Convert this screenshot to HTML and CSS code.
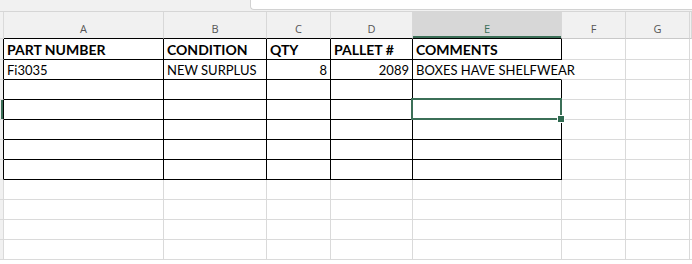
FILE: index.html
```html
<!DOCTYPE html>
<html lang="en">
<head>
    <meta charset="UTF-8">
    <meta name="viewport" content="width=device-width, initial-scale=1.0">
    <title>Pallet Sheet</title>
    <link rel="stylesheet" href="styles.css">
</head>
<body>

    <div class="topbar">
        <div class="formula-box"></div>
    </div>

    <div class="sheet">
        <div class="row colheads">
            <div class="rh"></div>
            <div class="ch top">A</div>
            <div class="ch top">B</div>
            <div class="ch top">C</div>
            <div class="ch top">D</div>
            <div class="ch top active">E</div>
            <div class="ch">F</div>
            <div class="ch">G</div>
            <div class="ch"></div>
        </div>

        <div class="row first">
            <div class="rh edge"></div>
            <div class="c b head">PART NUMBER</div>
            <div class="c b head">CONDITION</div>
            <div class="c b head">QTY</div>
            <div class="c b head">PALLET #</div>
            <div class="c b head">COMMENTS</div>
            <div class="c"></div>
            <div class="c"></div>
            <div class="c"></div>
        </div>

        <div class="row">
            <div class="rh edge"></div>
            <div class="c b">Fi3035</div>
            <div class="c b">NEW SURPLUS</div>
            <div class="c b num">8</div>
            <div class="c b num">2089</div>
            <div class="c b spill">BOXES HAVE SHELFWEAR</div>
            <div class="c"></div>
            <div class="c"></div>
            <div class="c"></div>
        </div>

        <div class="row">
            <div class="rh edge"></div>
            <div class="c b"></div>
            <div class="c b"></div>
            <div class="c b"></div>
            <div class="c b"></div>
            <div class="c b"></div>
            <div class="c"></div>
            <div class="c"></div>
            <div class="c"></div>
        </div>

        <div class="row">
            <div class="rh edge sel"></div>
            <div class="c b"></div>
            <div class="c b"></div>
            <div class="c b"></div>
            <div class="c b"></div>
            <div class="c b current"><span class="cursor"><span class="handle"></span></span></div>
            <div class="c"></div>
            <div class="c"></div>
            <div class="c"></div>
        </div>

        <div class="row">
            <div class="rh edge"></div>
            <div class="c b"></div>
            <div class="c b"></div>
            <div class="c b"></div>
            <div class="c b"></div>
            <div class="c b"></div>
            <div class="c"></div>
            <div class="c"></div>
            <div class="c"></div>
        </div>

        <div class="row">
            <div class="rh edge"></div>
            <div class="c b"></div>
            <div class="c b"></div>
            <div class="c b"></div>
            <div class="c b"></div>
            <div class="c b"></div>
            <div class="c"></div>
            <div class="c"></div>
            <div class="c"></div>
        </div>

        <div class="row">
            <div class="rh edge"></div>
            <div class="c b"></div>
            <div class="c b"></div>
            <div class="c b"></div>
            <div class="c b"></div>
            <div class="c b"></div>
            <div class="c"></div>
            <div class="c"></div>
            <div class="c"></div>
        </div>

        <div class="row">
            <div class="rh"></div>
            <div class="c"></div>
            <div class="c"></div>
            <div class="c"></div>
            <div class="c"></div>
            <div class="c"></div>
            <div class="c"></div>
            <div class="c"></div>
            <div class="c"></div>
        </div>

        <div class="row">
            <div class="rh"></div>
            <div class="c"></div>
            <div class="c"></div>
            <div class="c"></div>
            <div class="c"></div>
            <div class="c"></div>
            <div class="c"></div>
            <div class="c"></div>
            <div class="c"></div>
        </div>

        <div class="row">
            <div class="rh"></div>
            <div class="c"></div>
            <div class="c"></div>
            <div class="c"></div>
            <div class="c"></div>
            <div class="c"></div>
            <div class="c"></div>
            <div class="c"></div>
            <div class="c"></div>
        </div>

        <div class="row">
            <div class="rh"></div>
            <div class="c"></div>
            <div class="c"></div>
            <div class="c"></div>
            <div class="c"></div>
            <div class="c"></div>
            <div class="c"></div>
            <div class="c"></div>
            <div class="c"></div>
        </div>
    </div>

</body>
</html>
```

FILE: styles.css
```css
body {
    margin: 0;
    background: #fff;
    font-family: Lato, "Liberation Sans", sans-serif;
    overflow: hidden;
}

.topbar {
    display: flex;
    height: 12px;
    box-sizing: border-box;
    background: #f1f1f1;
    border-bottom: 1px solid #d6d6d6;
}

.formula-box {
    margin-left: auto;
    width: 442px;
    height: 10px;
    box-sizing: border-box;
    background: #fff;
    border-left: 1px solid #d2d2d2;
    border-bottom: 1px solid #d2d2d2;
    border-bottom-left-radius: 4px;
}

.sheet {
    height: 252px;
    overflow: hidden;
}

.row {
    display: grid;
    grid-template-columns: 4px 160px 103px 64px 82px 149px 64px 64px 1fr;
    height: 20px;
}

.row > div {
    box-sizing: border-box;
    border-right: 1px solid #dadada;
    border-bottom: 1px solid #dadada;
}

.row.colheads {
    height: 27px;
    background: #f1f1f1;
}

.row.first {
    height: 21px;
}

/* row headers (only a sliver is visible) */
.rh {
    background: #f1f1f1;
}

.row > .rh.edge {
    border-right-color: #000;
}

.row > .rh.sel {
    box-shadow: inset -2px 0 0 #3b6f57;
}

/* column letters */
.ch {
    display: flex;
    align-items: flex-end;
    justify-content: center;
    padding-bottom: 3px;
    font-family: "Open Sans", sans-serif;
    font-size: 11px;
    line-height: 13px;
    color: #555;
}

.row > .ch {
    border-right-color: #d8d8d8;
    border-bottom-color: #c9c9c9;
}

.row > .ch.top {
    border-bottom-color: #000;
}

.ch.active {
    background: #d7d7d7;
    color: #3b6f57;
    box-shadow: inset 0 -2px 0 #3b6f57;
}

/* cells */
.c {
    display: flex;
    align-items: flex-end;
    padding: 0 3px 1px;
    font-size: 13px;
    line-height: 16px;
    color: #000;
    white-space: nowrap;
}

.row > .c.b {
    border-right-color: #000;
    border-bottom-color: #000;
}

.c.head {
    font-weight: bold;
    font-size: 14px;
}

.c.num {
    justify-content: flex-end;
}

.row > .c.spill {
    border-right-color: #fff;
}

.c.current {
    position: relative;
}

.cursor {
    position: absolute;
    top: -2px;
    left: -2px;
    right: -1px;
    bottom: -1px;
    border: 2px solid #3b6f57;
}

.handle {
    position: absolute;
    right: -5px;
    bottom: -5px;
    width: 6px;
    height: 6px;
    background: #2f6a50;
    border: 1px solid #fff;
    box-sizing: content-box;
}
```
